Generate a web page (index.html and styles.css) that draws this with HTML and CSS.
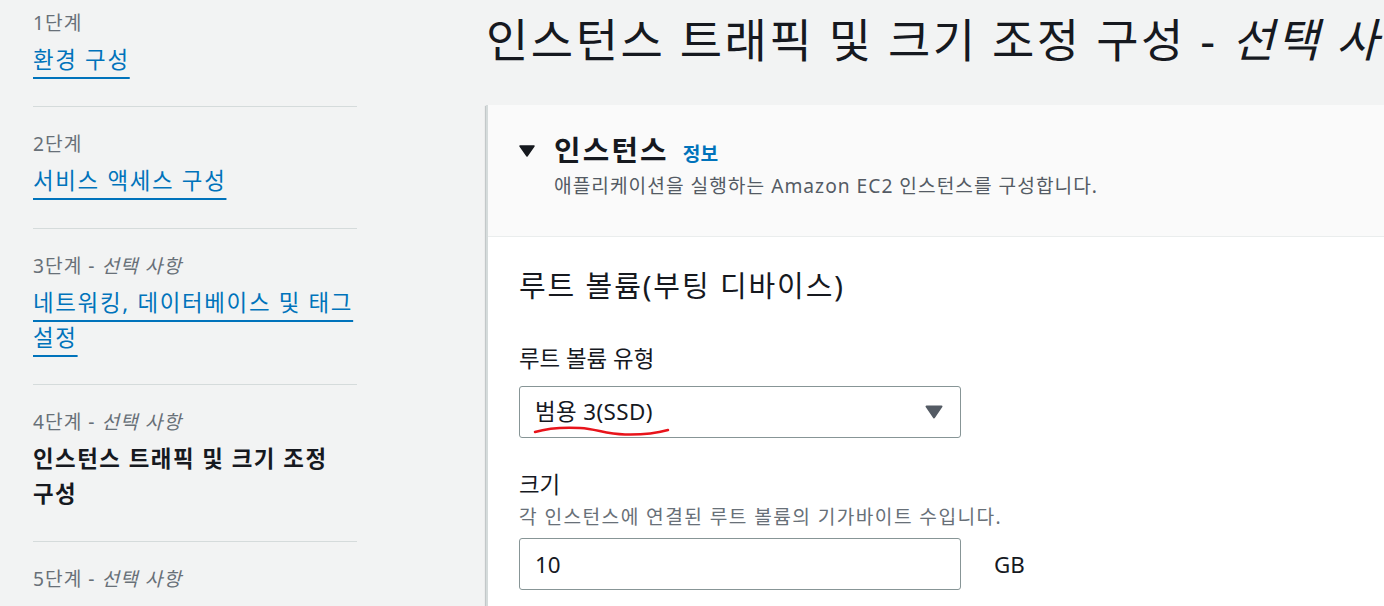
FILE: index.html
```html
<!DOCTYPE html>
<html lang="ko">
<head>
<meta charset="utf-8">
<title>인스턴스 트래픽 및 크기 조정 구성</title>
<link rel="stylesheet" href="styles.css">
</head>
<body>
<div class="layout">
  <nav class="steps">
    <div class="step first">
      <div class="step-label">1단계</div>
      <a class="step-link" href="#">환경 구성</a>
    </div>
    <div class="step">
      <div class="step-label">2단계</div>
      <a class="step-link" href="#">서비스 액세스 구성</a>
    </div>
    <div class="step">
      <div class="step-label">3단계 - <i>선택 사항</i></div>
      <a class="step-link" href="#">네트워킹, 데이터베이스 및 태그 설정</a>
    </div>
    <div class="step">
      <div class="step-label">4단계 - <i>선택 사항</i></div>
      <div class="step-current">인스턴스 트래픽 및 크기 조정 구성</div>
    </div>
    <div class="step last">
      <div class="step-label">5단계 - <i>선택 사항</i></div>
    </div>
  </nav>
  <main class="main">
    <h1 class="page-title">인스턴스 트래픽 및 크기 조정 구성 - <i>선택 사항</i></h1>
    <section class="card">
      <header class="card-header">
        <div class="card-title-row">
          <svg class="caret" width="16" height="12" viewBox="0 0 16 12"><path d="M1 1 H15 L8 11 Z" fill="#16191f" stroke="#16191f" stroke-width="1.5" stroke-linejoin="round"/></svg>
          <h2 class="card-title">인스턴스</h2>
          <a class="info-link" href="#">정보</a>
        </div>
        <p class="card-desc">애플리케이션을 실행하는 Amazon EC2 인스턴스를 구성합니다.</p>
      </header>
      <div class="card-body">
        <h3 class="section-title">루트 볼륨(부팅 디바이스)</h3>
        <div class="field-label">루트 볼륨 유형</div>
        <div class="select">
          <span class="select-value">범용 3(SSD)</span>
          <svg class="select-caret" width="18" height="14" viewBox="0 0 18 14"><path d="M1.5 1.5 H16.5 L9 12.5 Z" fill="#545b64" stroke="#545b64" stroke-width="2" stroke-linejoin="round"/></svg>
          <svg class="scribble" width="140" height="14" viewBox="0 0 140 14"><path d="M2 8 C 12 5, 28 3, 47 4 C 64 5, 72 10, 92 10.5 C 110 11, 124 9, 135 6" fill="none" stroke="#e8141b" stroke-width="2.5" stroke-linecap="round"/></svg>
        </div>
        <div class="field-label size-label">크기</div>
        <div class="constraint">각 인스턴스에 연결된 루트 볼륨의 기가바이트 수입니다.</div>
        <div class="input-row">
          <div class="input">10</div>
          <span class="unit">GB</span>
        </div>
      </div>
    </section>
  </main>
</div>
</body>
</html>
```

FILE: styles.css
```css
* { box-sizing: border-box; }
html, body {
  margin: 0;
  padding: 0;
  background: #f2f3f3;
  overflow: hidden;
  height: 606px;
}
body {
  font-family: "Noto Sans", "Noto Sans CJK KR", sans-serif;
  color: #16191f;
  word-break: keep-all;
}
.layout {
  display: grid;
  grid-template-columns: 324px 1100px;
  column-gap: 129px;
  padding-left: 33px;
}

/* sidebar */
.step {
  border-bottom: 1px solid #d5dbdb;
  padding: 22px 0 29.4px;
}
.step.first { padding-top: 8px; }
.step.last { border-bottom: none; }
.step-label {
  font-size: 19.2px;
  line-height: 30px;
  color: #687078;
  margin-bottom: 4px;
  letter-spacing: 1px;
}
.step-label i { font-style: italic; }
.step-link {
  font-size: 22.4px;
  line-height: 35px;
  color: #0073bb;
  letter-spacing: 1.7px;
  text-decoration: underline;
  text-decoration-thickness: 2px;
  text-underline-offset: 9px;
}
.step-current {
  font-size: 22.4px;
  line-height: 35px;
  font-weight: 700;
  letter-spacing: 1.5px;
  color: #16191f;
}

/* main */
.main { min-width: 0; }
.page-title {
  margin: 0;
  padding-top: 9px;
  font-size: 46px;
  line-height: 60px;
  font-weight: 400;
  letter-spacing: 2.5px;
  white-space: nowrap;
  color: #16191f;
  height: 105px;
}
.card {
  background: #ffffff;
  box-shadow: 0 1px 1px 0 rgba(0,28,36,.3), 1px 1px 1px 0 rgba(0,28,36,.15), -1px 1px 1px 0 rgba(0,28,36,.15);
  border-left: 2px solid #d5dbdb;
  min-height: 600px;
}
.card-header {
  background: #fafafa;
  border-bottom: 1px solid #eaeded;
  padding: 25px 0 36px 31px;
}
.card-title-row {
  display: flex;
  align-items: baseline;
}
.caret {
  margin-right: 19px;
  align-self: center;
  position: relative;
  top: 1px;
}
.card-title {
  margin: 0;
  font-size: 28.8px;
  line-height: 40px;
  font-weight: 700;
  letter-spacing: 2.2px;
}
.info-link {
  margin-left: 14px;
  font-size: 19.2px;
  font-weight: 700;
  color: #0073bb;
  text-decoration: none;
}
.card-desc {
  margin: 2px 0 0 35px;
  font-size: 19.2px;
  line-height: 28px;
  letter-spacing: 1px;
  color: #545b64;
}
.card-body {
  padding: 27px 0 0 31px;
}
.section-title {
  margin: 0;
  font-size: 29px;
  line-height: 44px;
  font-weight: 400;
  letter-spacing: 1.9px;
}
.field-label {
  margin-top: 33px;
  font-size: 22.4px;
  line-height: 35px;
}
.select {
  position: relative;
  margin-top: 10px;
  width: 442px;
  height: 52px;
  border: 1px solid #879596;
  border-radius: 3px;
  display: flex;
  align-items: center;
  justify-content: space-between;
  padding: 0 17px 0 15px;
  background: #fff;
}
.select-value {
  font-size: 22.4px;
  line-height: 30px;
  letter-spacing: 0.4px;
}
.scribble {
  position: absolute;
  left: 13px;
  top: 37px;
}
.size-label { margin-top: 29px; }
.constraint {
  margin-top: 1px;
  font-size: 19.2px;
  line-height: 28px;
  letter-spacing: 1.4px;
  color: #687078;
}
.input-row {
  margin-top: 7px;
  display: flex;
  align-items: center;
  gap: 33px;
}
.input {
  width: 442px;
  height: 52px;
  border: 1px solid #879596;
  border-radius: 3px;
  padding: 0 15px;
  display: flex;
  align-items: center;
  font-size: 22.4px;
  background: #fff;
}
.unit {
  font-size: 22.4px;
}
```
